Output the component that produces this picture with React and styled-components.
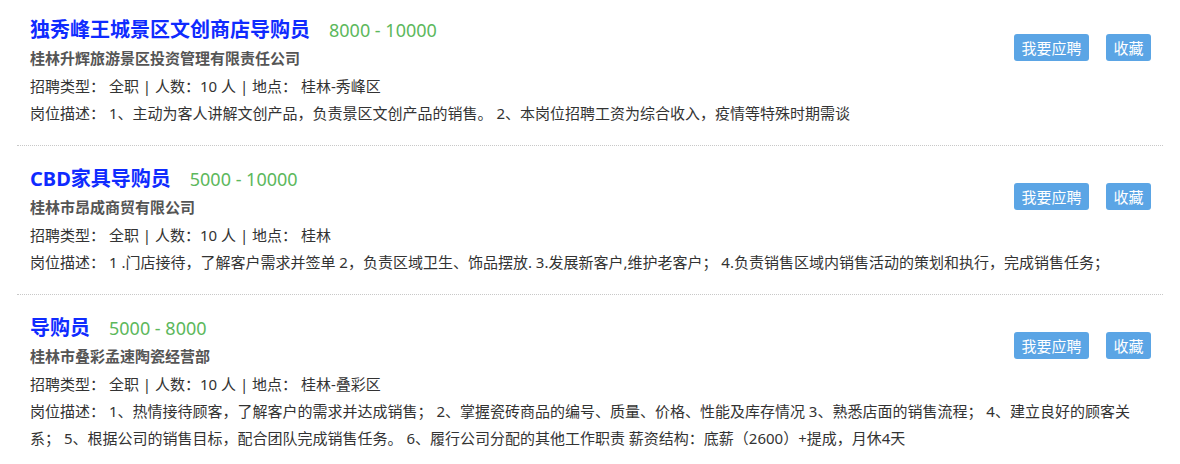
import React from "react";
import styled, { createGlobalStyle } from "styled-components";

const GlobalStyle = createGlobalStyle`
  html, body { margin: 0; padding: 0; background: #fff; }
  body {
    font-family: "Noto Sans", "Noto Sans CJK SC", sans-serif;
    color: #333;
  }
`;

const List = styled.div`
  padding: 0 17px;
`;

const Item = styled.div`
  display: grid;
  grid-template-columns: 1fr auto;
  padding: 19px 12px 18px 13px;
  border-bottom: 1px dotted #c8c8c8;
  &:first-child { padding-top: 16px; }
  &:last-child { border-bottom: none; }
`;

const Main = styled.div`
  display: flex;
  flex-direction: column;
  min-width: 0;
`;

const TitleLine = styled.div`
  display: flex;
  align-items: baseline;
  height: 28px;
  line-height: 28px;
`;

const Title = styled.a`
  font-size: 20px;
  font-weight: 700;
  color: #0f2bff;
  text-decoration: none;
`;

const Salary = styled.span`
  margin-left: 19px;
  font-size: 18px;
  font-weight: 400;
  color: #5cb85c;
`;

const Company = styled.div`
  font-size: 15px;
  font-weight: 700;
  color: #555;
  line-height: 28px;
`;

const Info = styled.div`
  font-size: 15px;
  color: #333;
  line-height: 28px;
`;

const Desc = styled.div`
  grid-column: 1 / -1;
  font-size: 15px;
  color: #333;
  line-height: 27px;
`;

const Actions = styled.div`
  display: flex;
  gap: 17px;
  margin-top: 18px;
  align-self: start;
`;

const Button = styled.button`
  height: 27px;
  padding: 0 7.5px;
  border: none;
  border-radius: 3px;
  background: #5ba5e5;
  color: #fff;
  font-family: "Noto Sans CJK SC", sans-serif;
  font-size: 15px;
  line-height: 27px;
  cursor: pointer;
`;

const jobs = [
  {
    title: "独秀峰王城景区文创商店导购员",
    salary: "8000 - 10000",
    company: "桂林升辉旅游景区投资管理有限责任公司",
    place: "桂林-秀峰区",
    desc: "岗位描述： 1、主动为客人讲解文创产品，负责景区文创产品的销售。 2、本岗位招聘工资为综合收入，疫情等特殊时期需谈",
  },
  {
    title: "CBD家具导购员",
    salary: "5000 - 10000",
    company: "桂林市昂成商贸有限公司",
    place: "桂林",
    desc: "岗位描述： 1 .门店接待，了解客户需求并签单 2，负责区域卫生、饰品摆放. 3.发展新客户,维护老客户； 4.负责销售区域内销售活动的策划和执行，完成销售任务；",
  },
  {
    title: "导购员",
    salary: "5000 - 8000",
    company: "桂林市叠彩孟速陶瓷经营部",
    place: "桂林-叠彩区",
    desc: "岗位描述： 1、热情接待顾客，了解客户的需求并达成销售； 2、掌握瓷砖商品的编号、质量、价格、性能及库存情况 3、熟悉店面的销售流程； 4、建立良好的顾客关系； 5、根据公司的销售目标，配合团队完成销售任务。 6、履行公司分配的其他工作职责 薪资结构：底薪（2600）+提成，月休4天",
  },
];

export default function App() {
  return (
    <>
      <GlobalStyle />
      <List>
        {jobs.map((j) => (
          <Item key={j.title}>
            <Main>
              <TitleLine>
                <Title href="#">{j.title}</Title>
                <Salary>{j.salary}</Salary>
              </TitleLine>
              <Company>{j.company}</Company>
              <Info>
                招聘类型： 全职 | 人数：10 人 | 地点： {j.place}
              </Info>
            </Main>
            <Actions>
              <Button>我要应聘</Button>
              <Button>收藏</Button>
            </Actions>
            <Desc>{j.desc}</Desc>
          </Item>
        ))}
      </List>
    </>
  );
}
